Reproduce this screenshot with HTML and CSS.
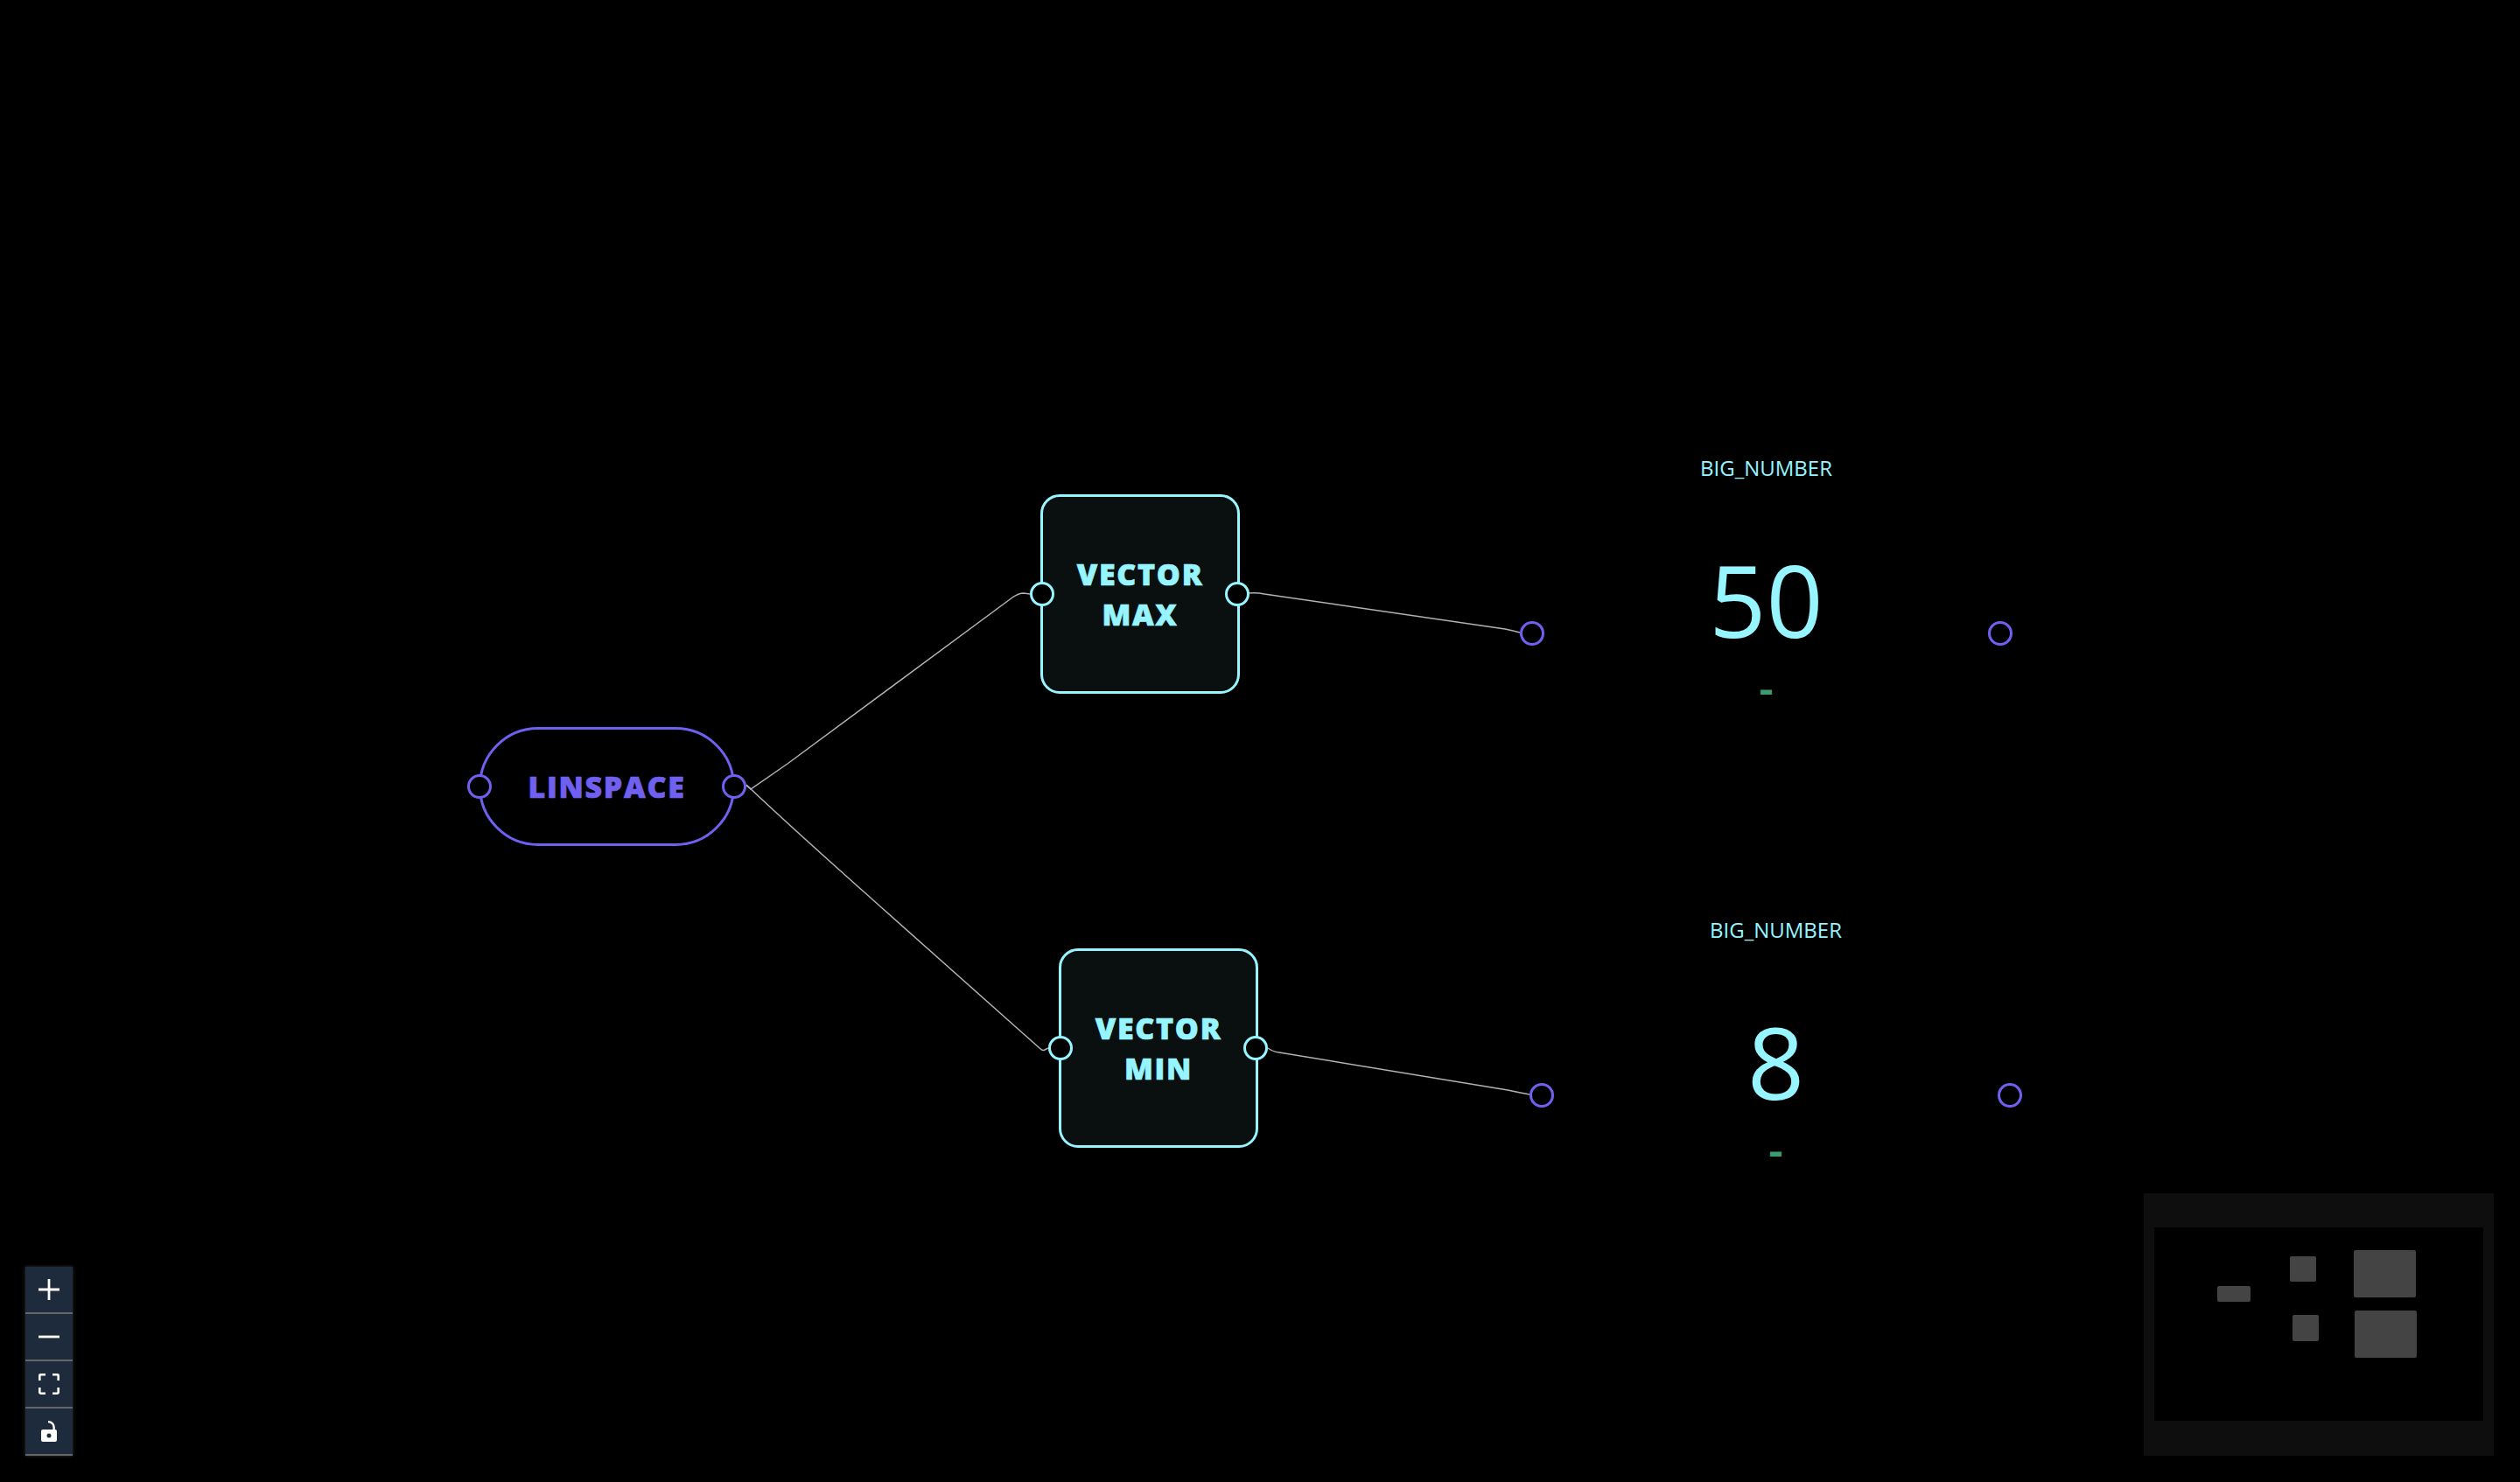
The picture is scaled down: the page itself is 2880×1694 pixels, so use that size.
FILE: index.html
```html
<!DOCTYPE html>
<html>

<head>
    <title>Flow</title>
    <link rel="stylesheet" href="styles.css">
</head>

<body>
    <div class="canvas">
        <svg class="edges" width="2880" height="1694" viewBox="0 0 2880 1694">
            <path d="M853 898 L858 902 L900 873 L1157 683 Q1164 678 1170 678 L1177 679" />
            <path d="M853 897 C900 942 960 995 1007 1037 L1188 1198 Q1191 1201 1193 1200.500 L1198 1198" />
            <path d="M1427 678 Q1436 677 1445 679 L1720 719 Q1730 721 1737 723" />
            <path d="M1449 1198 Q1454 1202 1462 1203 L1723 1246 Q1737 1249 1748 1251" />
        </svg>

        <div class="node pill linspace">
            LINSPACE
            <span class="handle left"></span>
            <span class="handle right"></span>
        </div>

        <div class="node box vector-max">
            VECTOR<br>MAX
            <span class="handle left"></span>
            <span class="handle right"></span>
        </div>

        <div class="node box vector-min">
            VECTOR<br>MIN
            <span class="handle left"></span>
            <span class="handle right"></span>
        </div>

        <div class="big-number big-max">
            <div class="big-title">BIG_NUMBER</div>
            <div class="big-value">50</div>
            <div class="big-delta">–</div>
            <span class="handle left"></span>
            <span class="handle right"></span>
        </div>

        <div class="big-number big-min">
            <div class="big-title">BIG_NUMBER</div>
            <div class="big-value">8</div>
            <div class="big-delta">–</div>
            <span class="handle left"></span>
            <span class="handle right"></span>
        </div>
    </div>

    <div class="controls">
        <button class="control">
            <svg viewBox="0 0 24 24"><path d="M0 10.600h10.600V0h2.800v10.600H24v2.800H13.400V24h-2.800V13.400H0z" /></svg>
        </button>
        <button class="control">
            <svg viewBox="0 0 24 24"><path d="M0 10.600h24v2.800H0z" /></svg>
        </button>
        <button class="control">
            <svg viewBox="0 0 24 24"><path d="M2.400 0H8v2.600H2.600V8H0V2.400A2.400 2.400 0 0 1 2.400 0zM16 0h5.600A2.400 2.400 0 0 1 24 2.400V8h-2.600V2.600H16zM0 16h2.600v5.400H8V24H2.400A2.400 2.400 0 0 1 0 21.600zM21.400 16H24v5.600a2.400 2.400 0 0 1-2.400 2.400H16v-2.600h5.400z" /></svg>
        </button>
        <button class="control">
            <svg viewBox="0 0 24 24"><path fill-rule="evenodd" d="M11 0c4.500 0 7.800 3.300 7.800 7.500V10H19a2 2 0 0 1 2 2v10a2 2 0 0 1-2 2H5a2 2 0 0 1-2-2V12a2 2 0 0 1 2-2h11.400V7.500c0-3-2.200-5-5.400-5.200zM12 14.500a2.500 2.500 0 1 0 0 5 2.500 2.500 0 0 0 0-5z" /></svg>
        </button>
    </div>

    <div class="minimap">
        <div class="mini-view">
            <span class="mini-node mini-linspace"></span>
            <span class="mini-node mini-max"></span>
            <span class="mini-node mini-min"></span>
            <span class="mini-node mini-big-max"></span>
            <span class="mini-node mini-big-min"></span>
        </div>
    </div>
</body>

</html>
```

FILE: styles.css
```css
* {
    box-sizing: border-box;
}

html,
body {
    margin: 0;
    padding: 0;
    width: 100%;
    height: 100%;
    overflow: hidden;
    background-color: #000;
    font-family: "Open Sans", sans-serif;
}

.canvas {
    position: relative;
    width: 2880px;
    height: 1694px;
}

.edges {
    position: absolute;
    top: 0;
    left: 0;
}

.edges path {
    fill: none;
    stroke: #b1b1b7;
    stroke-width: 1.5;
}

.node {
    position: absolute;
    display: flex;
    align-items: center;
    justify-content: center;
    text-align: center;
    font-weight: 800;
    font-size: 34px;
    line-height: 46px;
    letter-spacing: 1.7px;
    -webkit-text-stroke: 0.7px currentColor;
}

.pill {
    width: 293px;
    height: 136px;
    border: 3px solid #7060f0;
    border-radius: 68px;
    color: #7060f0;
    background-color: #000;
}

.box {
    width: 228px;
    height: 228px;
    border: 3px solid #97f5ff;
    border-radius: 22px;
    color: #97f5ff;
    background-color: #0a0f10;
}

.linspace {
    left: 547px;
    top: 831px;
}

.vector-max {
    left: 1189px;
    top: 565px;
}

.vector-min {
    left: 1210px;
    top: 1084px;
}

.handle {
    position: absolute;
    top: 50%;
    width: 28px;
    height: 28px;
    margin-top: -14px;
    border: 3px solid #97f5ff;
    border-radius: 50%;
    background-color: #000;
}

.handle.left {
    left: -14px;
}

.handle.right {
    right: -14px;
}

.box .handle.left {
    left: -15px;
}

.pill .handle {
    border-color: #7060f0;
}

.pill .handle.left {
    left: -16px;
}

.pill .handle.right {
    right: -16px;
}

.big-number {
    position: absolute;
    width: 535px;
    height: 428px;
    display: flex;
    flex-direction: column;
    align-items: center;
    color: #97f5ff;
}

.big-max {
    left: 1751px;
    top: 510px;
}

.big-min {
    left: 1762px;
    top: 1038px;
}

.big-number .handle {
    border-color: #7060f0;
}

.big-title {
    font-size: 24px;
    line-height: 50px;
}

.big-value {
    margin-top: 60px;
    font-size: 114px;
    line-height: 130px;
}

.big-delta {
    margin-top: 8px;
    font-size: 26px;
    font-weight: 800;
    line-height: 60px;
    color: #3d9970;
    -webkit-text-stroke: 2px currentColor;
}

.controls {
    position: absolute;
    left: 29px;
    bottom: 30px;
    width: 54px;
    display: flex;
    flex-direction: column;
    box-shadow: 0 0 4px rgba(255, 255, 255, 0.2);
}

.control {
    width: 54px;
    height: 54px;
    padding: 0;
    border: none;
    border-bottom: 2px solid #666;
    background-color: #1e2b3c;
    display: flex;
    align-items: center;
    justify-content: center;
}

.control svg {
    width: 24px;
    height: 24px;
    fill: #fff;
}

.minimap {
    position: absolute;
    left: 2450px;
    top: 1364px;
    width: 400px;
    height: 300px;
    padding: 39px 12px 40px;
    background-color: #0e0e0e;
}

.mini-view {
    position: relative;
    height: 100%;
    background-color: #000;
}

.mini-node {
    position: absolute;
    background-color: #444;
    border-radius: 2px;
}

.mini-linspace {
    left: 72px;
    top: 67px;
    width: 38px;
    height: 18px;
}

.mini-max {
    left: 155px;
    top: 33px;
    width: 30px;
    height: 29px;
}

.mini-min {
    left: 158px;
    top: 100px;
    width: 30px;
    height: 30px;
}

.mini-big-max {
    left: 228px;
    top: 26px;
    width: 71px;
    height: 54px;
}

.mini-big-min {
    left: 229px;
    top: 95px;
    width: 71px;
    height: 54px;
}
```
